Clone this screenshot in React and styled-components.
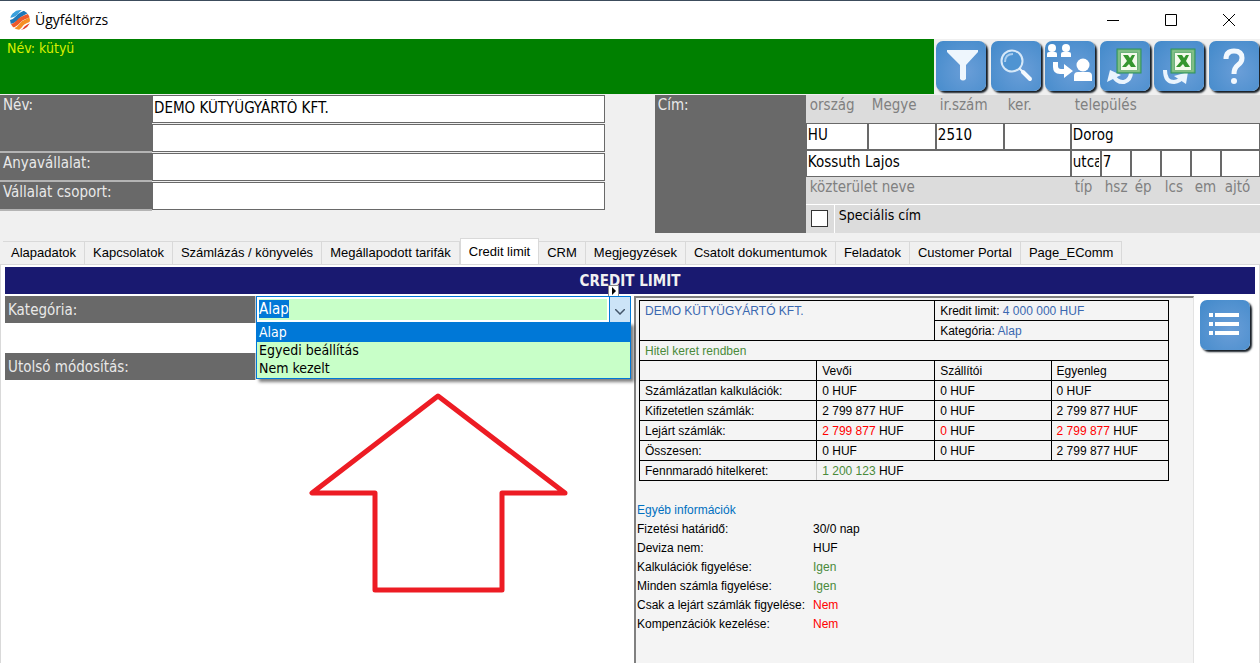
import React, { useEffect, useRef } from "react";
import styled, { createGlobalStyle } from "styled-components";

const tabs = [
  "Alapadatok",
  "Kapcsolatok",
  "Számlázás / könyvelés",
  "Megállapodott tarifák",
  "Credit limit",
  "CRM",
  "Megjegyzések",
  "Csatolt dokumentumok",
  "Feladatok",
  "Customer Portal",
  "Page_EComm",
];

const balances = [
  { label: "Számlázatlan kalkulációk:", values: ["0", "0", "0"] },
  { label: "Kifizetetlen számlák:", values: ["2 799 877", "0", "2 799 877"] },
  { label: "Lejárt számlák:", values: ["2 799 877", "0", "2 799 877"], overdue: true },
  { label: "Összesen:", values: ["0", "0", "2 799 877"] },
];

const details = [
  { label: "Fizetési határidő:", value: "30/0 nap" },
  { label: "Deviza nem:", value: "HUF" },
  { label: "Kalkulációk figyelése:", value: "Igen", color: "#4a8a3a" },
  { label: "Minden számla figyelése:", value: "Igen", color: "#4a8a3a" },
  { label: "Csak a lejárt számlák figyelése:", value: "Nem", color: "#ff0000" },
  { label: "Kompenzációk kezelése:", value: "Nem", color: "#ff0000" },
];

// Icons start here --------------
function LogoIcon() {
  return (
    <svg width="20" height="20" viewBox="0 0 20 20" aria-hidden="true">
      <defs>
        <clipPath id="ball">
          <circle cx="10" cy="10" r="10" />
        </clipPath>
      </defs>
      <g clipPath="url(#ball)" fill="none" strokeWidth="4">
        <rect width="20" height="20" fill="#fff" />
        <path d="M-1 6C4 6 6 4 8 1S12 -2 14 -3" stroke="#3aa0dc" />
        <path d="M-1 12C4 12 6 9 9 6S15 3 19 0" stroke="#1f78b8" />
        <path d="M-1 17C5 16 7 13 10 10S16 8 21 4" stroke="#ee5a2c" />
        <path d="M3 21C8 19 10 17 12 14S17 12 22 8" stroke="#f58f26" />
        <path d="M9 23C13 22 14 20 16 18S20 16 23 13" stroke="#e2402f" />
      </g>
    </svg>
  );
}

function FilterIcon() {
  return (
    <svg viewBox="0 0 50 50" aria-hidden="true">
      <path d="M11 9H42V11L30 24V38Q27 41 24 38V24L11 11Z" fill="#eef6fd" />
    </svg>
  );
}

function SearchIcon() {
  return (
    <svg viewBox="0 0 50 50" aria-hidden="true">
      <circle cx="21" cy="20" r="10.5" fill="#4f94d2" stroke="#d6e8f8" strokeWidth="2" />
      <path d="M14 21Q14 13 22 13" fill="none" stroke="#a9cdee" strokeWidth="2" />
      <path d="M28 27L33 32" stroke="#e8f2fb" strokeWidth="2" />
      <path d="M32 31L39 38" stroke="#f4f9fe" strokeWidth="4" strokeLinecap="round" />
    </svg>
  );
}

function MergeIcon() {
  return (
    <svg viewBox="0 0 50 50" aria-hidden="true">
      <g fill="#fff">
        <circle cx="7" cy="7" r="4" />
        <path d="M2 16V13Q2 11 4 11H10Q12 11 12 13V16Z" />
        <circle cx="21" cy="7" r="4" />
        <path d="M16 16V13Q16 11 18 11H24Q26 11 26 13V16Z" />
        <circle cx="38" cy="24" r="6.5" />
        <path d="M29 40V35Q29 31 33 31H43Q47 31 47 35V40Z" />
        <path d="M8 21H13V25Q13 28 16 28H19V23L28 30L19 37V33H15Q8 33 8 26Z" />
      </g>
    </svg>
  );
}

function ExcelIcon({ arrow }) {
  return (
    <svg viewBox="0 0 50 50" aria-hidden="true">
      {arrow === "in" ? (
        <g>
          <path d="M13 34Q17 42 24 41Q31 39 31 31" fill="none" stroke="#eaf4fd" strokeWidth="4" />
          <path d="M10 29L21 34L7 41Z" fill="#eaf4fd" />
        </g>
      ) : (
        <g>
          <path d="M11 29Q11 41 20 41Q26 40 29 36" fill="none" stroke="#eaf4fd" strokeWidth="4" />
          <path d="M20 35L34 31L32 43Z" fill="#eaf4fd" />
        </g>
      )}
      <rect x="17" y="8" width="24" height="24" fill="#6db27c" stroke="#2f9458" />
      <rect x="19" y="10" width="20" height="20" fill="none" stroke="#93c98e" />
      <rect x="21" y="12" width="16" height="17" fill="#f4faec" />
      <path d="M23 14H28L30 17L32 14H35L32 20L36 26H31L29 23L26 26H22L27 20Z" fill="#35962f" />
    </svg>
  );
}

function HelpIcon() {
  return (
    <svg viewBox="0 0 50 50" aria-hidden="true">
      <path
        d="M17 18Q17 10 25 10Q33 10 33 17Q33 21 29 24Q25 27 25 33"
        fill="none"
        stroke="#f2f8fe"
        strokeWidth="5"
      />
      <circle cx="25" cy="40" r="3" fill="#f2f8fe" />
    </svg>
  );
}

function ListIcon() {
  return (
    <svg viewBox="0 0 50 50" aria-hidden="true">
      <g fill="#fff">
        <path d="M9 13H13V17H9ZM15 13H39V17H15Z" />
        <path d="M9 22H13V26H9ZM15 22H39V26H15Z" />
        <path d="M9 31H13V35H9ZM15 31H39V35H15Z" />
      </g>
    </svg>
  );
}
// Icons end here --------------

function TextRow({ id, label, value }) {
  return (
    <FormRow>
      <RowLabel htmlFor={id}>{label}</RowLabel>
      <Field id={id} defaultValue={value} aria-label={label ? undefined : "Név 2"} />
    </FormRow>
  );
}

function CreditReport() {
  return (
    <Report>
      <ReportTable>
        <colgroup>
          <col width="33.5%" />
          <col width="22.3%" />
          <col width="22%" />
          <col width="22.2%" />
        </colgroup>
        <tbody>
          <tr>
            <td colSpan={2} rowSpan={2}>
              <Tone $color="#3a68b0">DEMO KÜTYÜGYÁRTÓ KFT.</Tone>
            </td>
            <td colSpan={2}>
              Kredit limit: <Tone $color="#3a68b0">4 000 000 HUF</Tone>
            </td>
          </tr>
          <tr>
            <td colSpan={2}>
              Kategória: <Tone $color="#3a68b0">Alap</Tone>
            </td>
          </tr>
          <tr>
            <td colSpan={4}>
              <Tone $color="#4a8a3a">Hitel keret rendben</Tone>
            </td>
          </tr>
          <tr>
            <td />
            <th scope="col">Vevői</th>
            <th scope="col">Szállítói</th>
            <th scope="col">Egyenleg</th>
          </tr>
          {balances.map((row) => (
            <tr key={row.label}>
              <th scope="row">{row.label}</th>
              {row.values.map((value, i) => (
                <td key={i}>
                  <Tone $color={row.overdue ? "#ff0000" : "inherit"}>{value}</Tone> HUF
                </td>
              ))}
            </tr>
          ))}
          <tr>
            <LightCell scope="row">Fennmaradó hitelkeret:</LightCell>
            <td colSpan={3}>
              <Tone $color="#4a8a3a">1 200 123</Tone> HUF
            </td>
          </tr>
        </tbody>
      </ReportTable>

      <ReportTitle>Egyéb információk</ReportTitle>
      <DetailList>
        {details.map((item) => (
          <React.Fragment key={item.label}>
            <dt>{item.label}</dt>
            <dd>
              <Tone $color={item.color || "inherit"}>{item.value}</Tone>
            </dd>
          </React.Fragment>
        ))}
      </DetailList>
    </Report>
  );
}

export default function App() {
  const category = useRef(null);

  // the category opens with its text selected
  useEffect(() => {
    category.current.focus();
    category.current.select();
  }, []);

  return (
    <Window>
      <GlobalStyle />
      <TitleBar>
        <LogoIcon />
        <WindowTitle>Ügyféltörzs</WindowTitle>
        <WindowButton aria-label="Minimize">
          <svg width="12" height="12" viewBox="0 0 12 12">
            <path d="M0 6.5H12" />
          </svg>
        </WindowButton>
        <WindowButton aria-label="Maximize">
          <svg width="12" height="12" viewBox="0 0 12 12">
            <path d="M0.5 0.5H11.5V11.5H0.5Z" />
          </svg>
        </WindowButton>
        <WindowButton aria-label="Close">
          <svg width="12" height="12" viewBox="0 0 12 12">
            <path d="M0 0L12 12M12 0L0 12" />
          </svg>
        </WindowButton>
      </TitleBar>

      <Header>
        <Banner>Név: kütyü</Banner>
        <Toolbar>
          <ToolButton aria-label="Szűrés"><FilterIcon /></ToolButton>
          <ToolButton aria-label="Keresés"><SearchIcon /></ToolButton>
          <ToolButton aria-label="Összevonás"><MergeIcon /></ToolButton>
          <ToolButton aria-label="Excel import"><ExcelIcon arrow="in" /></ToolButton>
          <ToolButton aria-label="Excel export"><ExcelIcon arrow="out" /></ToolButton>
          <ToolButton aria-label="Súgó"><HelpIcon /></ToolButton>
        </Toolbar>
      </Header>

      <FormArea>
        <NameForm>
          <TextRow id="name" label="Név:" value="DEMO KÜTYÜGYÁRTÓ KFT." />
          <TextRow id="name2" label="" value="" />
          <TextRow id="parent" label="Anyavállalat:" value="" />
          <TextRow id="group" label="Vállalat csoport:" value="" />
        </NameForm>

        <AddressForm>
          <AddressTitle>Cím:</AddressTitle>
          <AddressBody>
            <CityGrid>
              <Caption htmlFor="country">ország</Caption>
              <Caption htmlFor="county">Megye</Caption>
              <Caption htmlFor="zip">ir.szám</Caption>
              <Caption htmlFor="district">ker.</Caption>
              <Caption htmlFor="city">település</Caption>
              <AddressField id="country" defaultValue="HU" />
              <AddressField id="county" />
              <AddressField id="zip" defaultValue="2510" />
              <AddressField id="district" />
              <AddressField id="city" defaultValue="Dorog" />
            </CityGrid>
            <StreetGrid>
              <AddressField id="street" defaultValue="Kossuth Lajos" />
              <AddressField id="type" defaultValue="utca" />
              <AddressField id="number" defaultValue="7" />
              <AddressField id="building" />
              <AddressField id="stair" />
              <AddressField id="floor" />
              <AddressField id="door" />
              <Caption htmlFor="street">közterület neve</Caption>
              <Caption htmlFor="type">típ</Caption>
              <Caption htmlFor="number">hsz</Caption>
              <Caption htmlFor="building">ép</Caption>
              <Caption htmlFor="stair">lcs</Caption>
              <Caption htmlFor="floor">em</Caption>
              <Caption htmlFor="door">ajtó</Caption>
            </StreetGrid>
            <SpecialRow>
              <CheckCell>
                <Checkbox type="checkbox" id="special" />
              </CheckCell>
              <label htmlFor="special">Speciális cím</label>
            </SpecialRow>
          </AddressBody>
        </AddressForm>
      </FormArea>

      <TabList role="tablist">
        {tabs.map((tab) => (
          <Tab key={tab} role="tab" aria-selected={tab === "Credit limit"} $active={tab === "Credit limit"}>
            {tab}
          </Tab>
        ))}
      </TabList>

      <Panel>
        <PanelTitle>
          CREDIT LIMIT
          <Marker aria-hidden="true" />
        </PanelTitle>
        <PanelGrid>
          <Settings>
            <SettingRow>
              <SettingLabel htmlFor="category">Kategória:</SettingLabel>
              <Combo>
                <ComboInput id="category" ref={category} defaultValue="Alap" />
                <ComboButton aria-label="Lista">
                  <svg width="10" height="6" viewBox="0 0 10 6">
                    <path d="M0 0L5 5L10 0" fill="none" stroke="#44566a" strokeWidth="1.5" />
                  </svg>
                </ComboButton>
                <ComboList size={3} defaultValue="Alap" aria-label="Kategória">
                  <option>Alap</option>
                  <option>Egyedi beállítás</option>
                  <option>Nem kezelt</option>
                </ComboList>
              </Combo>
            </SettingRow>
            <SettingRow>
              <SettingLabel as="span">Utolsó módosítás:</SettingLabel>
            </SettingRow>
            <Arrow viewBox="0 0 260 200" aria-hidden="true">
              <path d="M130 4L4 101H67V198H194V101H257Z" />
            </Arrow>
          </Settings>
          <CreditReport />
          <SideBar>
            <ToolButton aria-label="Lista nézet"><ListIcon /></ToolButton>
          </SideBar>
        </PanelGrid>
      </Panel>
    </Window>
  );
}

// Styled components start here --------------
const GlobalStyle = createGlobalStyle`
  * {
    box-sizing: border-box;
  }

  body {
    margin: 0;
    background-color: #f0f0f0;
    overflow: hidden;
  }

  button, input, select {
    font: inherit;
    color: inherit;
    border-radius: 0;
    outline: none;
  }
`;

const Window = styled.div`
  --label-bg: #696969;
  --caption-bg: #dcdcdc;
  --report-font: "Liberation Sans", sans-serif;

  min-height: 100vh;
  display: flex;
  flex-direction: column;
  background-color: #f0f0f0;
  color: #000;
  font-family: "DejaVu Sans Condensed", "DejaVu Sans", sans-serif;
  font-size: 15px;
  line-height: 18px;
`;

const TitleBar = styled.header`
  display: flex;
  align-items: center;
  height: 39px;
  padding: 0 2px 0 10px;
  border-top: 1px solid #3c4c5c;
  background-color: #fff;
`;

const WindowTitle = styled.h1`
  flex: 1;
  margin: 0 0 0 5px;
  font-family: "Open Sans", sans-serif;
  font-size: 14px;
  font-weight: 400;
`;

const WindowButton = styled.button`
  display: flex;
  align-items: center;
  justify-content: center;
  width: 58px;
  height: 38px;
  padding: 0;
  border: 0;
  background: none;

  path {
    fill: none;
    stroke: #000;
  }
`;

const Header = styled.div`
  display: flex;
  height: 56px;
`;

const Banner = styled.div`
  flex: 1;
  height: 55px;
  padding-left: 7px;
  background-color: #008000;
  color: #d8f000;
  font-size: 14px;
`;

const Toolbar = styled.div`
  display: flex;
  justify-content: space-between;
  width: 326px;
  padding: 2px 1px 0 2px;
`;

const ToolButton = styled.button`
  width: 50px;
  height: 50px;
  padding: 0;
  border: 0;
  border-radius: 7px;
  background: radial-gradient(circle at 60% 60%, #6a9ed8, #4189ca);
  box-shadow: 2px 2px 2px #101820;

  svg {
    display: block;
    width: 50px;
    height: 50px;
  }
`;

const FormArea = styled.div`
  display: grid;
  grid-template-columns: 48fr 52fr;
`;

const NameForm = styled.div`
  display: flex;
  flex-direction: column;
`;

const FormRow = styled.div`
  display: flex;
  height: 29px;
`;

const RowLabel = styled.label`
  width: 152px;
  padding: 1px 0 0 3px;
  background-color: var(--label-bg);
  border-bottom: 2px solid #b4b4b4;
  color: #e8e8e8;

  ${FormRow}:first-child & {
    border-bottom: 0;
  }
`;

const Field = styled.input`
  flex: 1;
  min-width: 0;
  height: 28px;
  padding: 0 1px 3px;
  border: 1px solid #696969;
  background-color: #fff;
`;

const AddressForm = styled.div`
  display: flex;
  margin-left: 50px;
`;

const AddressTitle = styled.div`
  width: 151px;
  padding: 1px 0 0 3px;
  background-color: var(--label-bg);
  color: #e8e8e8;
`;

const AddressBody = styled.div`
  flex: 1;
  background-color: var(--caption-bg);
`;

const CityGrid = styled.div`
  display: grid;
  grid-template-columns: 62px 68px 68px 67px 1fr;
  grid-template-rows: 28px 27px;
`;

const StreetGrid = styled.div`
  display: grid;
  grid-template-columns: 265px repeat(5, 30px) 1fr;
  grid-template-rows: 27px 27px;
`;

const Caption = styled.label`
  padding: 1px 0 0 4px;
  color: #808080;
  white-space: nowrap;
`;

const AddressField = styled.input`
  width: 100%;
  min-width: 0;
  padding: 0 1px 3px;
  border: 1px solid #696969;
  background-color: #fff;
`;

const SpecialRow = styled.div`
  display: flex;
  height: 29px;
  border-top: 1px solid #fff;
  font-size: 14px;

  label {
    padding: 1px 0 0 4px;
  }
`;

const CheckCell = styled.span`
  width: 29px;
  padding: 5px 0 0 5px;
  border-right: 1px solid #fff;
`;

const Checkbox = styled.input`
  appearance: none;
  display: block;
  width: 17px;
  height: 17px;
  margin: 0;
  border: 1px solid #333;
  background-color: #fff;
`;

const TabList = styled.div`
  display: flex;
  align-items: flex-end;
  height: 27px;
  margin-top: 4px;
  padding-left: 3px;
`;

const Tab = styled.button`
  height: ${(props) => (props.$active ? "26px" : "23px")};
  padding: 0 8px;
  border: 1px solid #d9d9d9;
  border-bottom: 0;
  border-left-width: ${(props) => (props.$active ? "1px" : "0")};
  background-color: ${(props) => (props.$active ? "#fff" : "#f0f0f0")};
  font-family: var(--report-font);
  font-size: 13px;
  white-space: nowrap;
`;

const Panel = styled.main`
  flex: 1;
  display: flex;
  flex-direction: column;
  padding: 2px 4px 0;
  border: 1px solid #d9d9d9;
  border-bottom: 0;
  background-color: #fff;
`;

const PanelTitle = styled.h2`
  position: relative;
  height: 27px;
  margin: 0;
  background-color: #191970;
  color: #f0f0f0;
  font-size: 15px;
  line-height: 28px;
  text-align: center;
`;

// insertion marker that hangs over the lower edge of the title
const Marker = styled.span`
  position: absolute;
  left: calc(50% - 22px);
  bottom: -3px;
  width: 11px;
  height: 12px;
  border: 1px solid #888;
  background-color: #fff;

  &::after {
    content: "";
    position: absolute;
    left: 3px;
    top: 1px;
    border: 4px solid transparent;
    border-left-color: #000;
    border-right: 0;
  }
`;

const PanelGrid = styled.div`
  flex: 1;
  display: grid;
  grid-template-columns: 626fr 560fr 58px;
  column-gap: 3px;
  padding-top: 2px;
`;

const Settings = styled.div`
  position: relative;
  display: flex;
  flex-direction: column;
  gap: 30px;
`;

const SettingRow = styled.div`
  display: flex;
  height: 27px;
`;

const SettingLabel = styled.label`
  width: 251px;
  padding: 5px 0 0 3px;
  border-right: 1px solid #c8c8c8;
  background-color: var(--label-bg);
  color: #e8e8e8;
`;

const Combo = styled.div`
  position: relative;
  flex: 1;
  display: flex;
  border: 1px solid #0078d7;
`;

const ComboInput = styled.input`
  flex: 1;
  min-width: 0;
  padding: 0 0 1px;
  border: 2px solid #fff;
  background-color: #c8ffc8;

  &::selection {
    background-color: #0078d7;
    color: #fff;
  }
`;

const ComboButton = styled.button`
  width: 21px;
  padding: 0;
  border: 0;
  border-left: 1px solid #0078d7;
  background-color: #cce4f7;
`;

const ComboList = styled.select`
  position: absolute;
  z-index: 1;
  top: 100%;
  left: -1px;
  right: -1px;
  height: 57px;
  padding: 0;
  border: 1px solid #0078d7;
  background-color: #c8ffc8;
  box-shadow: 3px 3px 3px rgba(0, 0, 0, 0.5);
  font-size: 14px;
  overflow: hidden;

  option {
    height: 18px;
    min-height: 18px;
    padding: 0 0 0 2px;
    line-height: 18px;
  }

  option:first-child {
    height: 19px;
    padding-top: 1px;
  }

  option:checked {
    background: linear-gradient(#0078d7, #0078d7);
    color: #fff;
    -webkit-text-fill-color: #fff;
  }
`;

// pointer drawn over the settings
const Arrow = styled.svg`
  position: absolute;
  left: 303px;
  top: 96px;
  width: 260px;
  height: 200px;
  overflow: visible;

  path {
    fill: none;
    stroke: #ed1c24;
    stroke-width: 5;
    stroke-linejoin: round;
  }
`;

const Report = styled.section`
  padding: 2px 24px 0 1px;
  border-top: 2px solid #808080;
  border-left: 2px solid #808080;
  border-right: 1px solid #e3e3e3;
  background-color: #f4f4f4;
  font-family: var(--report-font);
  font-size: 12px;
`;

const ReportTable = styled.table`
  width: calc(100% - 2px);
  margin-left: 2px;
  table-layout: fixed;
  border-collapse: collapse;

  tr {
    height: 20px;
  }

  td,
  th {
    padding: 1px 5px 0;
    border: 1px solid #000;
    font-weight: 400;
    line-height: 18px;
    text-align: left;
    vertical-align: top;
    white-space: nowrap;
  }
`;

const LightCell = styled.th`
  && {
    border-right-color: #c8c8c8;
  }
`;

const Tone = styled.span`
  color: ${(props) => props.$color};
`;

const ReportTitle = styled.h3`
  margin: 20px 0 0;
  color: #0070c0;
  font-size: 12px;
  font-weight: 400;
  line-height: 19px;
`;

const DetailList = styled.dl`
  display: grid;
  grid-template-columns: 176px 1fr;
  margin: 0;
  line-height: 19px;

  dd {
    margin: 0;
  }
`;

const SideBar = styled.aside`
  padding: 4px 3px 0;
`;
// Styled components end here --------------
